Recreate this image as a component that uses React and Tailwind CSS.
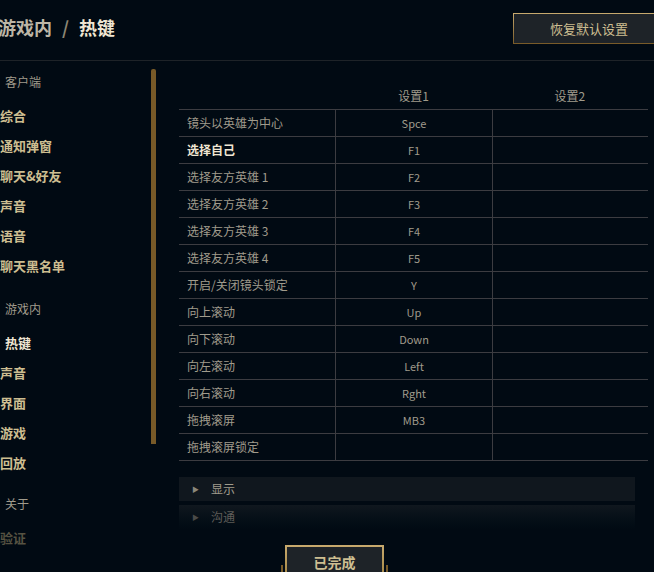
import React from "react";

const font = { fontFamily: '"Noto Sans CJK SC", "Noto Sans", sans-serif' };

const clientItems = ["综合", "通知弹窗", "聊天&好友", "声音", "语音", "聊天黑名单"];
const gameItems = [
  { label: "热键", active: true },
  { label: "声音" },
  { label: "界面" },
  { label: "游戏" },
  { label: "回放" },
];

const hotkeys = [
  { name: "镜头以英雄为中心", key: "Spce" },
  { name: "选择自己", key: "F1", bright: true },
  { name: "选择友方英雄 1", key: "F2" },
  { name: "选择友方英雄 2", key: "F3" },
  { name: "选择友方英雄 3", key: "F4" },
  { name: "选择友方英雄 4", key: "F5" },
  { name: "开启/关闭镜头锁定", key: "Y" },
  { name: "向上滚动", key: "Up" },
  { name: "向下滚动", key: "Down" },
  { name: "向左滚动", key: "Left" },
  { name: "向右滚动", key: "Rght" },
  { name: "拖拽滚屏", key: "MB3" },
  { name: "拖拽滚屏锁定", key: "" },
];

const SectionTitle = ({ children }) => (
  <div className="flex h-[30px] items-center pl-[5px] text-[12px] text-[#a09b8c]">
    {children}
  </div>
);

const NavItem = ({ label, active }) => (
  <div
    className={
      active
        ? "flex h-[30px] items-center pl-[5px] text-[13px] font-bold text-[#f0e6d2]"
        : "flex h-[30px] items-center text-[13px] font-bold text-[#cdbe91]"
    }
  >
    {label}
  </div>
);

const App = () => {
  return (
    <div
      className="relative h-[572px] w-[654px] overflow-hidden bg-[#010a13]"
      style={font}
    >
      <header className="flex h-[61px] items-start justify-between border-b border-[#1e2328]">
        <h1 className="-ml-[2px] mt-[13px] flex items-center text-[18px] font-bold leading-[28px]">
          <span className="text-[#bdb6a6]">游戏内</span>
          <span className="mx-[10px] text-[#8c8674]">/</span>
          <span className="text-[#f0e6d2]">热键</span>
        </h1>
        <div className="-mr-[11px] mt-[13px] h-[31px] w-[152px] shrink-0 bg-gradient-to-b from-[#c8aa6e] to-[#785a28] p-px">
          <button className="h-full w-full bg-[#1e2328] text-[13px] text-[#cdbe91]">
            恢复默认设置
          </button>
        </div>
      </header>

      <div className="flex">
        <aside className="flex w-[179px] shrink-0">
          <nav className="w-[151px] pt-[6px]">
            <SectionTitle>客户端</SectionTitle>
            <div className="mt-[4px]">
              {clientItems.map((item) => (
                <NavItem key={item} label={item} />
              ))}
            </div>
            <div className="mt-[13px]">
              <SectionTitle>游戏内</SectionTitle>
            </div>
            <div className="mt-[4px]">
              {gameItems.map((item) => (
                <NavItem key={item.label} label={item.label} active={item.active} />
              ))}
            </div>
            <div className="mt-[11px]">
              <SectionTitle>关于</SectionTitle>
            </div>
            <div className="mt-[4px] flex h-[30px] items-center text-[13px] font-bold text-[#7a7156] opacity-70">
              验证
            </div>
          </nav>
          <div className="mt-[8px] h-[375px] w-[5px] rounded-t-[2px] bg-[#785a28]" />
        </aside>

        <main className="w-[475px] pt-[21px]">
          <div className="w-[469px]">
            <div className="grid h-[28px] grid-cols-3 border-b border-[#3c3c41] text-[12px] text-[#a09b8c]">
              <div />
              <div className="flex items-center justify-center">设置1</div>
              <div className="flex items-center justify-center">设置2</div>
            </div>
            {hotkeys.map((row) => (
              <div
                key={row.name}
                className="grid h-[27px] grid-cols-3 border-b border-[#3c3c41] text-[12px]"
              >
                <div
                  className={
                    row.bright
                      ? "flex items-center pl-[8px] font-bold text-[#f0e6d2]"
                      : "flex items-center pl-[8px] text-[#a09b8c]"
                  }
                >
                  {row.name}
                </div>
                <div className="flex items-center justify-center border-l border-[#3c3c41] text-[11px] text-[#a09b8c]">
                  {row.key}
                </div>
                <div className="border-l border-[#3c3c41]" />
              </div>
            ))}
          </div>

          <div className="mt-[16px] w-[456px] space-y-[4px]">
            <div className="flex h-[24px] items-center bg-[#10171e] text-[12px] text-[#a09b8c]">
              <span className="ml-[13px] mr-[12px] text-[7px] text-[#8c877a]">▶</span>
              显示
            </div>
            <div className="flex h-[24px] items-center bg-gradient-to-b from-[#10171e] to-[#010a13] text-[12px] text-[#5f5d58]">
              <span className="ml-[13px] mr-[12px] text-[7px] text-[#4a4a48]">▶</span>
              沟通
            </div>
          </div>

          <div className="relative ml-[106px] mt-[16px] w-[99px]">
            <span className="absolute -left-[4px] top-[20px] h-[10px] w-[2px] bg-[#785a28]" />
            <span className="absolute -right-[4px] top-[20px] h-[10px] w-[2px] bg-[#785a28]" />
            <div className="h-[36px] w-[99px] bg-gradient-to-b from-[#c8aa6e] to-[#a0823f] p-[2px]">
              <button className="h-full w-full bg-[#1e2328] pb-[2px] text-[14px] font-bold text-[#cdbe91]">
                已完成
              </button>
            </div>
          </div>
        </main>
      </div>
    </div>
  );
};

export default App;
